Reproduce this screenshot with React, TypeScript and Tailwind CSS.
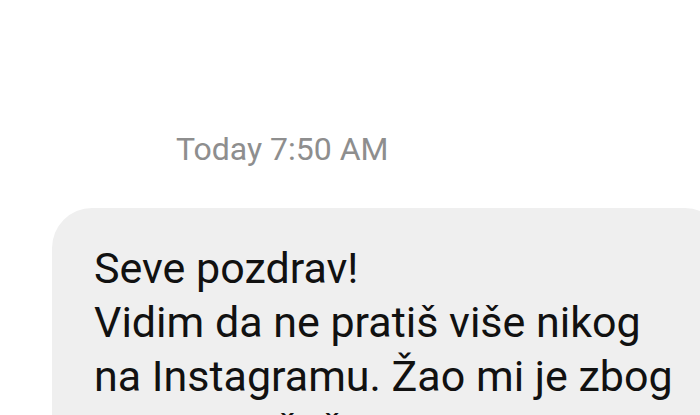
export default function App() {
  return (
    <div className="h-[415px] w-[700px] overflow-hidden bg-white font-['Roboto',_'Noto_Sans',_sans-serif]">
      {/* timestamp */}
      <div className="pl-[176px] pt-[129px] text-[32px] leading-[40px] text-[#8e8e8e]">
        Today 7:50 AM
      </div>

      {/* incoming message bubble */}
      <div className="ml-[52px] mt-[39px] w-[673px] rounded-[40px] bg-[#efefef] pl-[42px] pt-[33px] pb-[30px]">
        <p className="text-[43px] leading-[54px] whitespace-nowrap text-[#111111]">
          Seve pozdrav!
          <br />
          Vidim da ne pratiš više nikog
          <br />
          na Instagramu. Žao mi je zbog
          <br />
          tome. Možeš se ponovo vratiti
        </p>
      </div>
    </div>
  )
}
